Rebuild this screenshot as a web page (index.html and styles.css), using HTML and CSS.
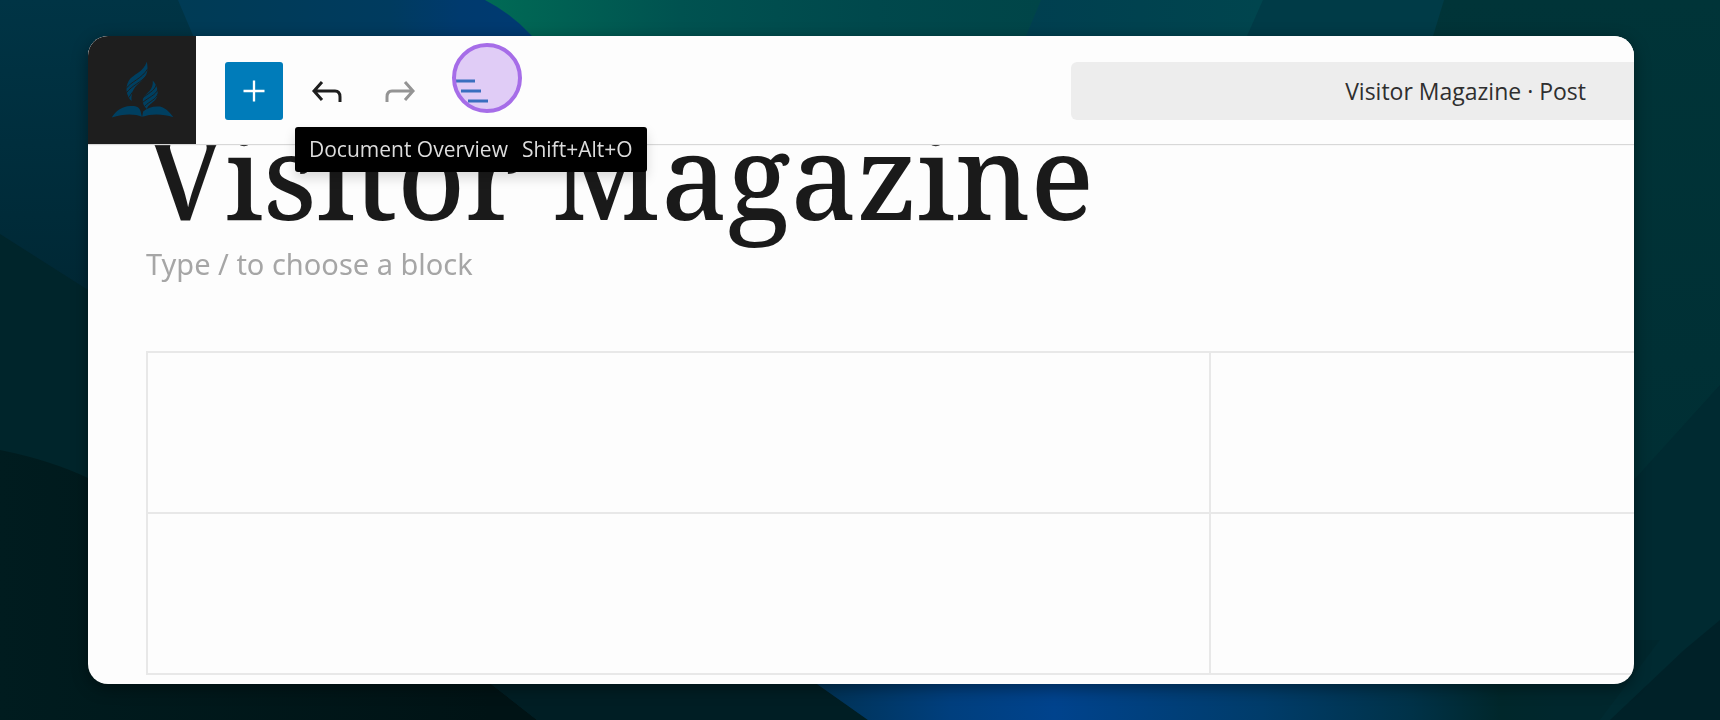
FILE: index.html
```
<!DOCTYPE html>
<html lang="en">
<head>
    <meta charset="UTF-8">
    <meta name="viewport" content="width=device-width, initial-scale=1.0">
    <title>Visitor Magazine</title>
    <link rel="stylesheet" href="styles.css">
</head>
<body>
    <svg class="wallpaper" viewBox="0 0 1720 720" preserveAspectRatio="none" aria-hidden="true">
        <defs>
            <linearGradient id="navy" x1="0" y1="0" x2="0" y2="1">
                <stop offset="0" stop-color="#003445"/>
                <stop offset="0.4" stop-color="#002835"/>
            </linearGradient>
            <linearGradient id="blue" gradientUnits="userSpaceOnUse" x1="180" y1="0" x2="530" y2="0">
                <stop offset="0" stop-color="#003b55"/>
                <stop offset="0.6" stop-color="#003b5f"/>
                <stop offset="0.8" stop-color="#003a6e"/>
                <stop offset="1" stop-color="#003a72"/>
            </linearGradient>
            <linearGradient id="green" gradientUnits="userSpaceOnUse" x1="487" y1="0" x2="1040" y2="0">
                <stop offset="0" stop-color="#006a55"/>
                <stop offset="0.35" stop-color="#005250"/>
                <stop offset="0.7" stop-color="#00484c"/>
                <stop offset="1" stop-color="#004548"/>
            </linearGradient>
            <linearGradient id="teal" gradientUnits="userSpaceOnUse" x1="1020" y1="0" x2="1260" y2="0">
                <stop offset="0" stop-color="#003f50"/>
                <stop offset="1" stop-color="#00454e"/>
            </linearGradient>
            <linearGradient id="right" x1="0" y1="0" x2="0" y2="1">
                <stop offset="0" stop-color="#003438"/>
                <stop offset="1" stop-color="#002c32"/>
            </linearGradient>
            <linearGradient id="floor" gradientUnits="userSpaceOnUse" x1="0" y1="0" x2="490" y2="0">
                <stop offset="0" stop-color="#001c1f"/>
                <stop offset="1" stop-color="#001315"/>
            </linearGradient>
            <linearGradient id="glow" gradientUnits="userSpaceOnUse" x1="817" y1="0" x2="1560" y2="0">
                <stop offset="0" stop-color="#003254"/>
                <stop offset="0.18" stop-color="#003f7e"/>
                <stop offset="0.32" stop-color="#00438d"/>
                <stop offset="0.6" stop-color="#003c6a"/>
                <stop offset="0.8" stop-color="#003248"/>
                <stop offset="0.92" stop-color="#00272b"/>
                <stop offset="1" stop-color="#00272d"/>
            </linearGradient>
        </defs>
        <rect width="1720" height="720" fill="url(#navy)"/>
        <path d="M178 0H600V400H400Q260 200 178 0Z" fill="url(#blue)"/>
        <path d="M485 0H1100V400H640Q580 80 532 36Q512 14 485 0Z" fill="url(#green)"/>
        <path d="M1041 0H1300V400H950L1016 60Z" fill="url(#teal)"/>
        <path d="M1263 0H1500V400H1180L1247 36Z" fill="#003b47"/>
        <path d="M1444 0H1720V720H1380L1433 36Z" fill="url(#right)"/>
        <path d="M1720 385L1634 480L1500 600V720H1720Z" fill="#002a31"/>
        <path d="M0 234L88 290L700 600V720H0Z" fill="#00252b"/>
        <path d="M0 450Q50 460 88 478L491 684L537 720H0Z" fill="url(#floor)"/>
        <path d="M440 640H780L817 684L868 720H537L491 684Z" fill="#001e24"/>
        <path d="M780 640H1660L1600 720H868L817 684Z" fill="url(#glow)"/>
        <path d="M1720 620L1684 650L1610 720H1720Z" fill="#002128"/>
    </svg>

    <div class="editor">
        <header class="editor-header">
            <a class="site-logo" href="#" aria-label="View posts">
                <svg viewBox="20 26 190 174">
                    <path d="M128 28C133 52 130 72 110 88C92 102 80 116 82 146C68 132 60 108 74 84C86 66 118 60 128 28Z"/>
                    <path d="M146 84C162 102 166 128 154 142C144 154 132 158 128 170C116 160 112 144 120 132C130 120 148 112 146 84Z"/>
                    <path d="M22 196C36 174 54 162 78 161C98 160 106 166 109 176L113 194C92 184 58 184 22 196Z"/>
                    <path d="M114 194L117 178C132 164 150 161 168 163C186 168 196 180 208 195C176 184 140 184 114 194Z"/>
                    <g class="logo-lines">
                        <path d="M66 108C80 88 114 78 130 50M66 122C84 98 112 90 126 70M74 136C84 114 104 106 116 86"/>
                        <path d="M114 138C130 124 152 116 156 98M116 150C132 136 156 128 162 110M122 162C134 148 156 142 162 124"/>
                    </g>
                </svg>
            </a>

            <div class="toolbar">
                <button class="tool tool-add" aria-label="Add block">
                    <svg viewBox="0 0 24 24"><path d="M12 3V21M3 12H21"/></svg>
                </button>
                <button class="tool" aria-label="Undo">
                    <svg viewBox="0 0 36 36"><path d="M13 9L5 18L13 27M5 18H26Q31 18 31 24V29"/></svg>
                </button>
                <button class="tool tool-redo" aria-label="Redo">
                    <svg viewBox="0 0 36 36"><path d="M23 9L31 18L23 27M31 18H10Q5 18 5 24V29"/></svg>
                </button>
                <button class="tool tool-overview" aria-label="Document Overview">
                    <svg viewBox="0 0 36 36"><path d="M1 8H20M6 18H26M13 28H33"/></svg>
                    <span class="pointer"></span>
                </button>
                <div class="tooltip" role="tooltip"><span>Document Overview</span><span>Shift+Alt+O</span></div>
            </div>

            <button class="document-bar">Visitor Magazine · Post</button>
        </header>

        <main class="canvas">
            <h1 class="post-title">Visitor Magazine</h1>
            <input class="block-prompt" type="text" placeholder="Type / to choose a block" aria-label="Add default block">
            <table class="block-table">
                <tr><td></td><td></td></tr>
                <tr><td></td><td></td></tr>
            </table>
        </main>
    </div>
</body>
</html>
```
FILE: styles.css
```
* {
    box-sizing: border-box;
}
body {
    margin: 0;
    padding: 36px 86px 36px 88px;
    min-height: 100vh;
    display: flex;
    background: #00252b;
    color: #1a1a1a;
    font-family: "Noto Sans", sans-serif;
}
.wallpaper {
    position: fixed;
    top: 0;
    left: 0;
    width: 100%;
    height: 100%;
    z-index: -1;
}
button {
    padding: 0;
    border: none;
    background: none;
    font-family: inherit;
    cursor: pointer;
}
.editor {
    flex: 1;
    min-width: 0;
    display: flex;
    flex-direction: column;
    overflow: hidden;
    border-radius: 20px;
    background: #fdfdfd;
    box-shadow: 0 4px 16px rgba(0, 0, 0, 0.4);
}

/* top bar */
.editor-header {
    position: relative;
    z-index: 1;
    display: flex;
    align-items: flex-start;
    height: 108px;
    background: #fdfdfd;
    box-shadow: 0 1px 1px #d8d8d8;
}
.site-logo {
    display: flex;
    align-items: center;
    justify-content: center;
    align-self: stretch;
    width: 108px;
    background: #1e1e1e;
}
.site-logo svg {
    width: 63px;
    height: 58px;
    fill: #003f60;
}
.logo-lines path {
    fill: none;
    stroke: #1e1e1e;
    stroke-width: 3;
}
.toolbar {
    position: relative;
    display: flex;
    gap: 15px;
    margin: 26px 0 0 29px;
}
.tool {
    position: relative;
    display: flex;
    align-items: center;
    justify-content: center;
    width: 58px;
    height: 58px;
    border-radius: 3px;
}
.tool svg {
    width: 36px;
    height: 36px;
    fill: none;
    stroke: #1e1e1e;
    stroke-width: 3;
}
.tool-add {
    background: #007cba;
}
.tool-add svg {
    width: 28px;
    height: 28px;
    stroke: #fff;
    stroke-width: 2;
}
.tool-redo svg {
    stroke: #949494;
}
.tool-overview svg {
    stroke: #0070aa;
}
.pointer {
    position: absolute;
    top: -19px;
    left: 8px;
    width: 70px;
    height: 70px;
    border: 4px solid #a66de8;
    border-radius: 50%;
    background: rgba(166, 109, 232, 0.34);
}
.tooltip {
    position: absolute;
    top: 65px;
    left: 70px;
    display: flex;
    gap: 14px;
    padding: 0 14px;
    border-radius: 3px;
    background: #000;
    box-shadow: 0 6px 12px rgba(0, 0, 0, 0.15);
    color: #ddd;
    font-family: "Open Sans", sans-serif;
    font-size: 21px;
    line-height: 45px;
    white-space: nowrap;
}
.document-bar {
    flex: 1;
    height: 58px;
    margin: 26px 0 0 auto;
    max-width: 563px;
    padding-right: 48px;
    border-radius: 6px 0 0 6px;
    background: #ededed;
    color: #2f2f2f;
    font-family: "Open Sans", sans-serif;
    font-size: 23px;
    text-align: right;
}

/* post content */
.canvas {
    flex: 1;
    padding: 0 0 6px 58px;
    overflow: hidden;
}
.post-title {
    margin: -40px 0 -5px;
    font-family: "Noto Serif", "Droid Serif", serif;
    font-size: 116px;
    font-weight: 500;
    line-height: 142px;
    white-space: nowrap;
}
.block-prompt {
    display: block;
    width: 100%;
    height: 44px;
    padding: 0;
    border: none;
    background: none;
    font-family: "Noto Sans", sans-serif;
    font-size: 29px;
}
.block-prompt::placeholder {
    color: #a6a6a6;
    opacity: 1;
}
.block-table {
    width: 143%;
    margin-top: 66px;
    border-collapse: collapse;
    table-layout: fixed;
}
.block-table td {
    height: 161px;
    padding: 0;
    border: 2px solid #e8e8e8;
}
```
